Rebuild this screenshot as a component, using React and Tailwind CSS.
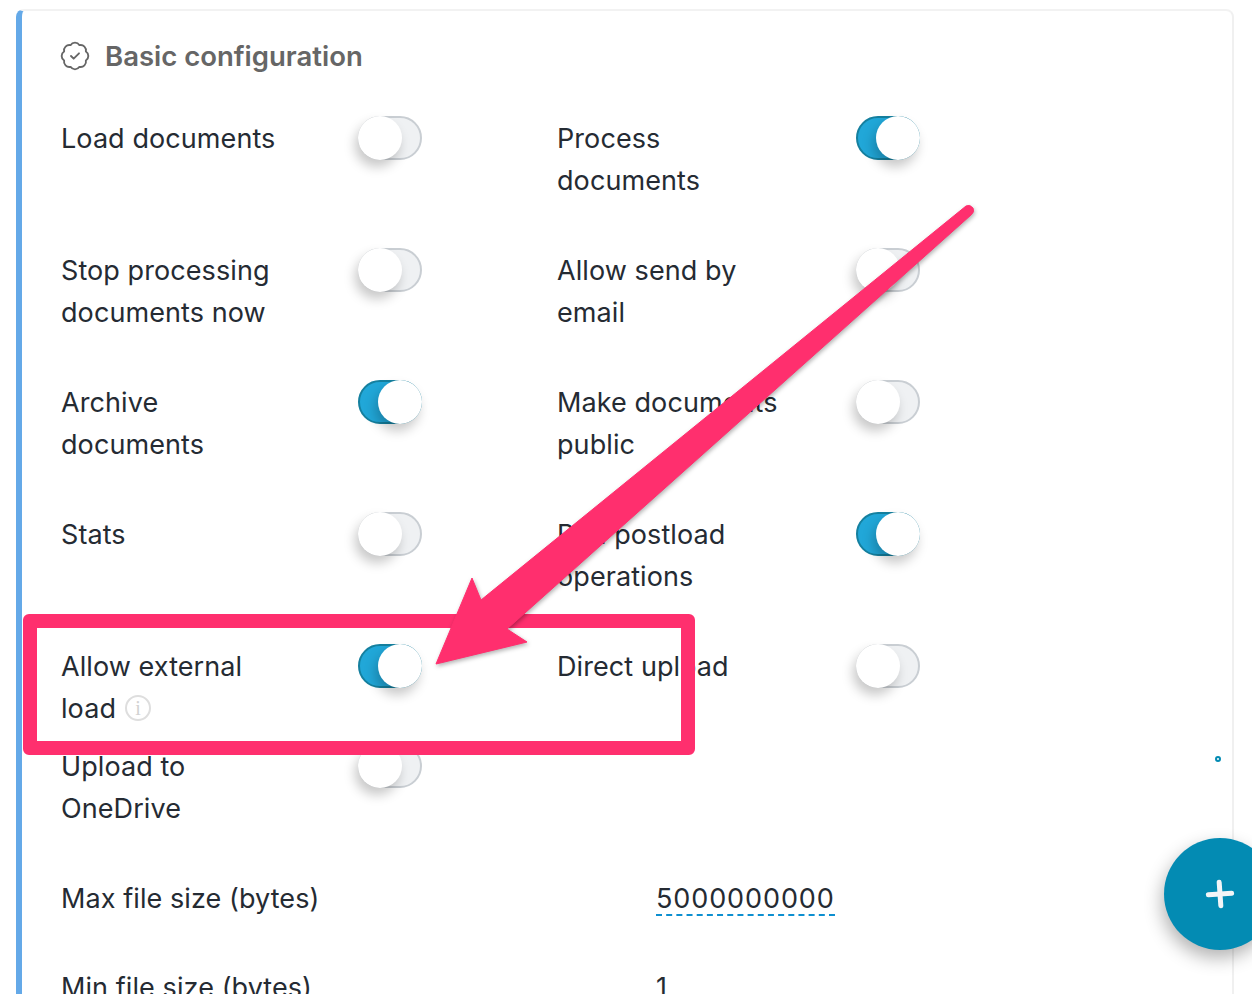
import { BadgeCheck, Plus } from 'lucide-react';

const rows = [
  { mb: 'mb-12', left: { label: 'Load documents', on: false }, right: { label: 'Process documents', on: true } },
  { mb: 'mb-12', left: { label: 'Stop processing documents now', on: false }, right: { label: 'Allow send by email', on: false } },
  { mb: 'mb-12', left: { label: 'Archive documents', on: true }, right: { label: 'Make documents public', on: false } },
  { mb: 'mb-12', left: { label: 'Stats', on: false }, right: { label: 'Run postload operations', on: true } },
  { mb: 'mb-4', left: { label: 'Allow external load', on: true, info: true }, right: { label: 'Direct upload', on: false } },
  { mb: 'mb-12', left: { label: 'Upload to OneDrive', on: false } },
];

function Toggle({ on }) {
  return (
    <div
      className={`relative h-[44px] w-[64px] shrink-0 -mt-[2px] rounded-full border-2 ${
        on ? 'border-[#15809f] bg-[#21a7d8]' : 'border-[#c9ced3] bg-[#eff1f3]'
      }`}
    >
      <div
        className={`absolute -top-[2px] h-[44px] w-[44px] rounded-full bg-white shadow-[-3px_7px_12px_rgba(0,0,0,0.22)] ${
          on ? '-right-[2px]' : '-left-[2px]'
        }`}
      />
    </div>
  );
}

function Setting({ label, on, info, second }) {
  return (
    <div className="flex w-[496px] items-start">
      <div className={second ? 'w-[299px]' : 'w-[297px]'}>
        <div className="w-[242px]">
          {label}
          {info && (
            <span className="ml-[9px] inline-flex h-[26px] w-[26px] items-center justify-center rounded-full border-2 border-[#dedede] align-[3px] font-['Liberation_Serif',serif] text-[20px] leading-none text-[#d2d2d2]">
              i
            </span>
          )}
        </div>
      </div>
      <Toggle on={on} />
    </div>
  );
}

export default function App() {
  return (
    <div className="relative h-[994px] overflow-hidden bg-white font-['Inter',sans-serif] text-[27px] leading-[42px] tracking-[0.08px] text-[#252b33]">
      <div className="ml-4 mr-[18px] mt-[9px] h-[1100px] rounded-t-lg border-t-2 border-r-2 border-l-[6px] border-t-[#f2f2f2] border-r-[#f0f0f0] border-l-[#64a9e8] pl-[39px] pt-[24px]">
        <div className="mb-[41px] flex h-[42px] items-center gap-[14px] text-[27.5px] font-semibold tracking-normal text-[#666666]">
          <BadgeCheck size={32} strokeWidth={1.4} className="-ml-[2px]" />
          <span>Basic configuration</span>
        </div>

        {rows.map((row, i) => (
          <div key={i} className={`flex h-[84px] ${row.mb}`}>
            <Setting {...row.left} />
            {row.right && <Setting {...row.right} second />}
          </div>
        ))}

        <div className="mb-[47px] flex h-[42px]">
          <div className="w-[595px]">Max file size (bytes)</div>
          <div className="h-[38px] border-b-2 border-dashed border-[#0d8fd0] tracking-[0.9px]">5000000000</div>
        </div>
        <div className="flex h-[42px]">
          <div className="w-[595px]">Min file size (bytes)</div>
          <div>1</div>
        </div>
      </div>

      {/* small marker on the right */}
      <div className="absolute left-[1215px] top-[756px] h-[6px] w-[6px] rounded-full border-2 border-[#038bb3] bg-white" />

      {/* add button */}
      <div className="absolute left-[1164px] top-[838px] flex h-[112px] w-[112px] items-center justify-center rounded-full bg-[#038bb3] shadow-[-2px_8px_18px_rgba(0,0,0,0.3)]">
        <Plus size={40} strokeWidth={3} className="-rotate-[4deg] text-[#f2f5f7]" />
      </div>

      {/* screenshot annotation */}
      <div className="absolute left-[23px] top-[614px] h-[141px] w-[672px] rounded-[6px] border-[14px] border-[#ff2f6e]" />
      <svg className="absolute left-0 top-0 drop-shadow-[1px_2px_2px_rgba(0,0,0,0.3)]" width="1252" height="994" viewBox="0 0 1252 994">
        <path
          d="M481 600 L966 206 Q970 204 973 208 Q975 212 971 215 L507 629 L527 642 L436 664 L472 578 Z"
          fill="#ff2f6e"
          stroke="#ff2f6e"
          strokeLinejoin="round"
        />
      </svg>
    </div>
  );
}
